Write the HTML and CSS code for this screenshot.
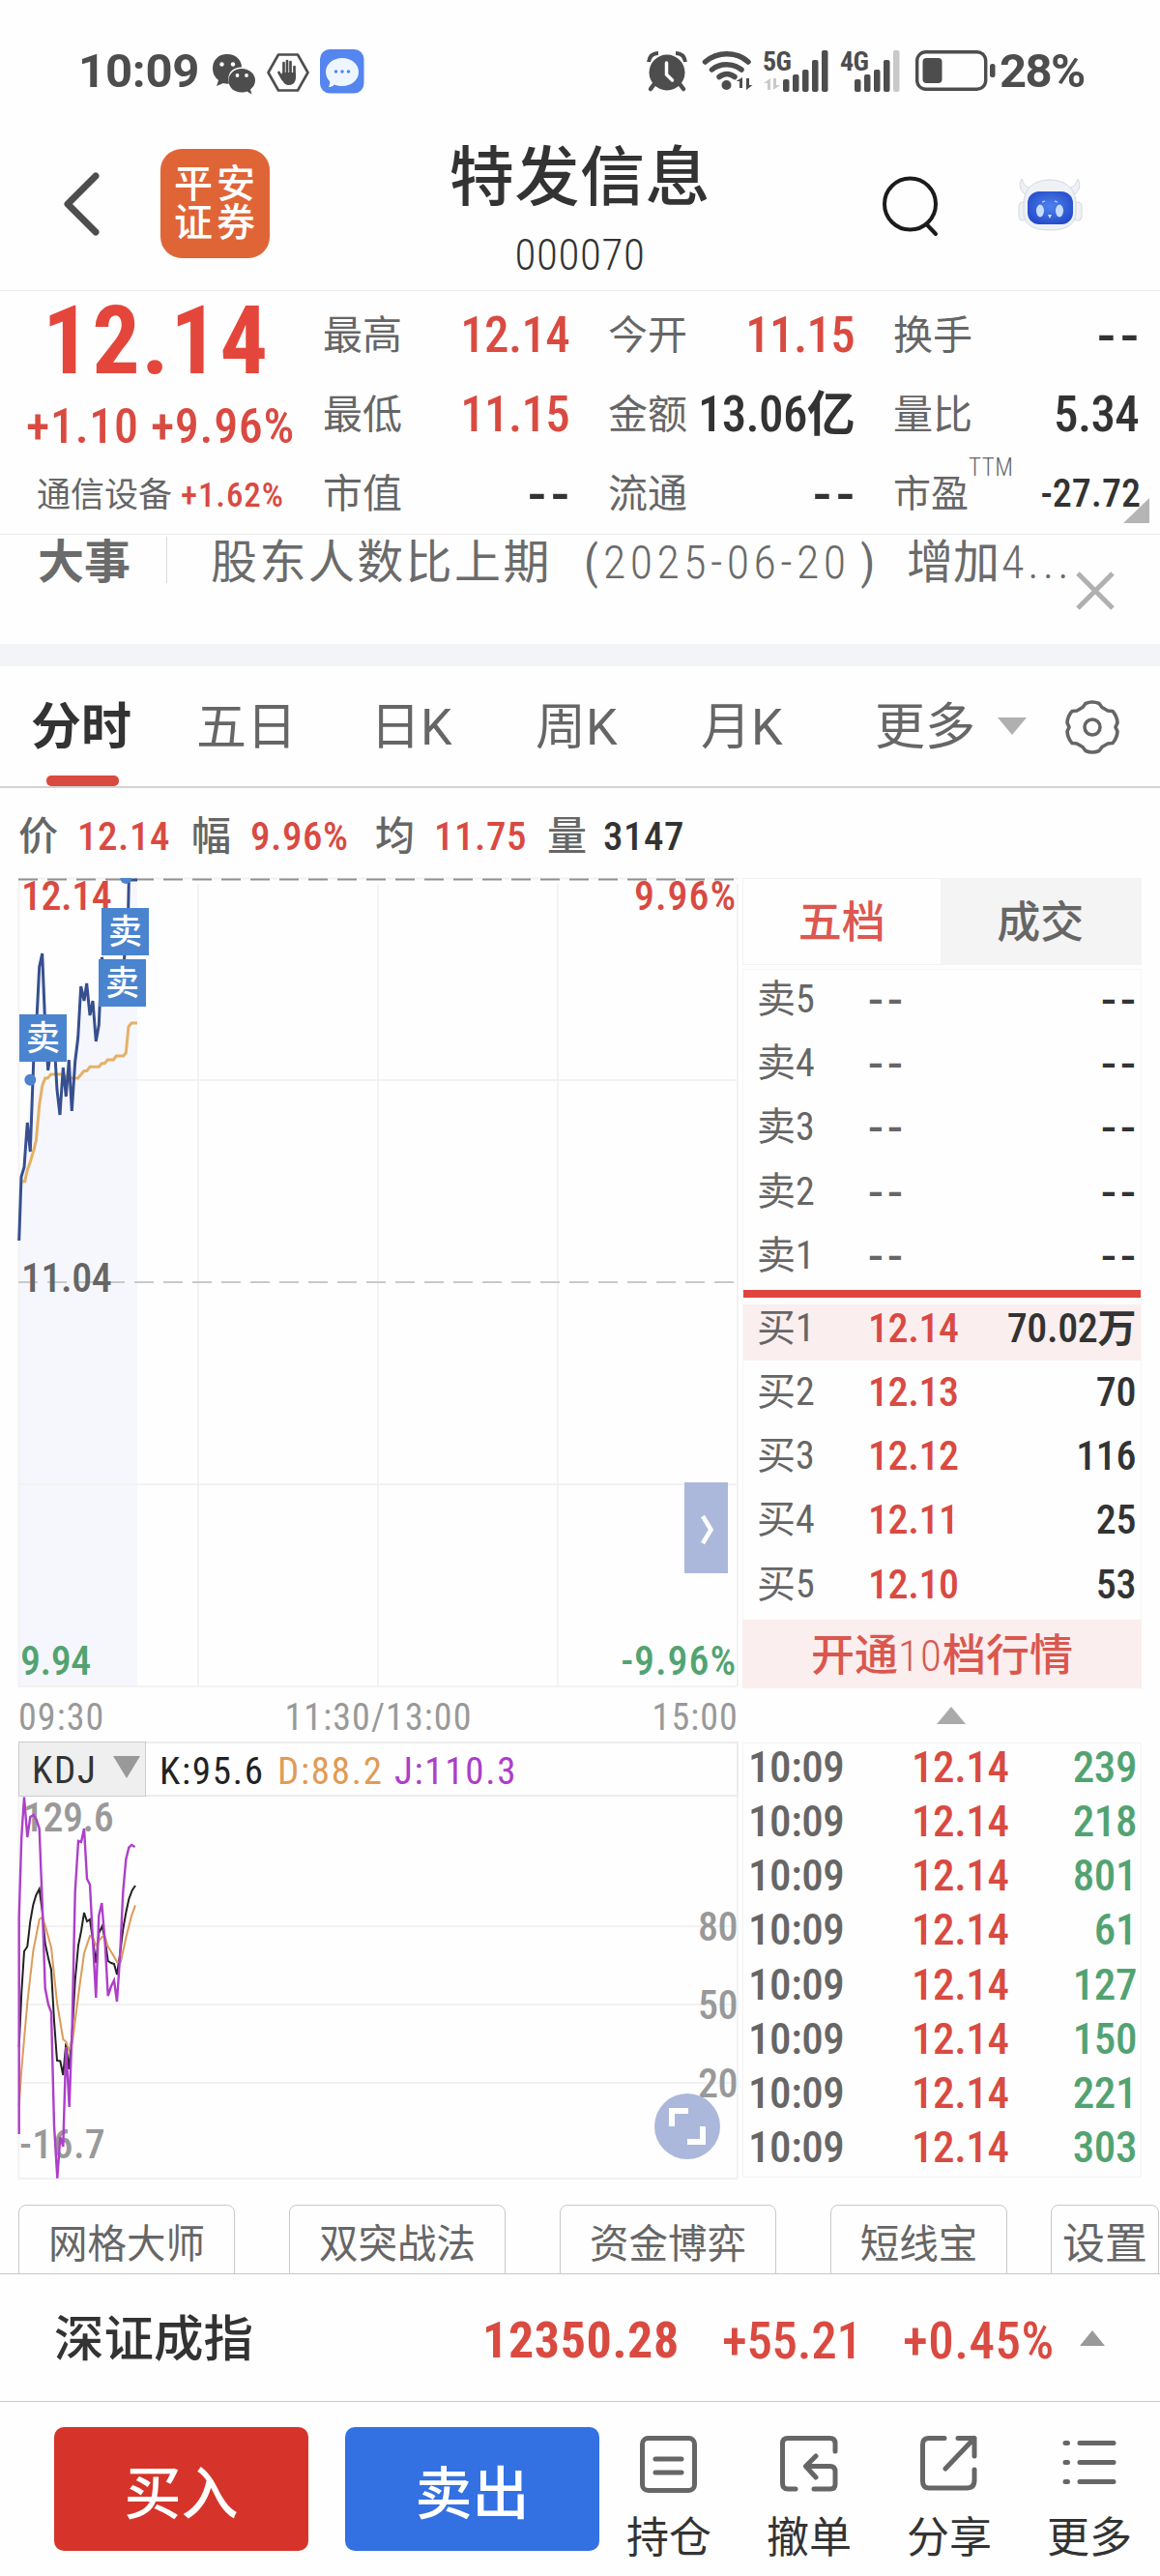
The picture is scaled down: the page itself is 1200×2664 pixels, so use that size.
FILE: index.html
```html
<!DOCTYPE html>
<html lang="zh-CN">
<head>
  <meta charset="UTF-8" />
  <meta name="viewport" content="width=device-width, initial-scale=1.0"/>
  <title>特发信息 000070</title>
  <link rel="stylesheet" href="styles.css">
</head>
<body>
  <div class="app">
    <!-- Status bar -->
    <div class="status-bar">
      <span class="clock">10:09</span>
      <svg class="ic-wechat" width="46" height="44" viewBox="0 0 46 44">
        <path d="M16 3C7 3 1 9 1 18c0 5 2 9 6 12l-2 6 7-3c2 .6 4 .8 6 .6-3-12 5-17 13-17C31 9 25 3 16 3z" fill="#4d4d4d"/>
        <circle cx="10.500" cy="13.500" r="2.200" fill="#fff"/><circle cx="22" cy="13.500" r="2.200" fill="#fff"/>
        <path d="M31 18c-8 0-13.500 5.500-13.500 12.500S23 42.500 31 42.500c2 0 4-.4 5.500-1l5 3-1.500-5c3-2.300 5-5.500 5-9.500C45 23.500 39 18 31 18z" fill="#4d4d4d"/>
        <circle cx="26.500" cy="25" r="1.900" fill="#fff"/><circle cx="36" cy="25" r="1.900" fill="#fff"/>
      </svg>
      <svg class="ic-hand" width="46" height="42" viewBox="0 0 46 42">
        <path d="M13 2.500h20l10.500 18.500L33 39.500H13L2.500 21z" fill="none" stroke="#4d4d4d" stroke-width="2.600" stroke-linejoin="round"/>
        <g stroke="#4d4d4d" stroke-width="2.700" stroke-linecap="round" fill="none">
          <path d="M18.500 11v12M22 9v13M25.500 10v12M29.500 15v9M13.500 21l4 7"/>
        </g>
        <path d="M17 21h14v5c0 5-3 8-7 8-3 0-5-1-7-5l-2-4z" fill="#4d4d4d"/>
      </svg>
      <svg class="ic-msg" width="46" height="46" viewBox="0 0 46 46">
        <rect width="45.500" height="45.500" rx="10" fill="#5585ee"/>
        <path d="M23 9c10 0 17 6.500 17 14.500S33 38 23 38c-3 0-5-.5-8-1.500-2 2-4 2.500-6 2.500 1-2 1.500-4 1-6-2.500-2.500-4-6-4-9.500C6 15.500 13 9 23 9z" fill="#edf5ff"/>
        <circle cx="16.500" cy="23" r="1.800" fill="#5585ee"/><circle cx="23" cy="23" r="1.800" fill="#5585ee"/><circle cx="29.500" cy="23" r="1.800" fill="#5585ee"/>
      </svg>
      <svg class="ic-alarm" width="42" height="42" viewBox="0 0 42 42">
        <circle cx="21" cy="22" r="18.500" fill="#4d4d4d"/>
        <path d="M7 35l-3 4M35 35l3 4" stroke="#4d4d4d" stroke-width="4.500" stroke-linecap="round"/>
        <path d="M2 11C3 5 7 2 12 2M40 11C39 5 35 2 30 2" stroke="#4d4d4d" stroke-width="4" fill="none"/>
        <path d="M20.500 12v12l6 6" stroke="#fff" stroke-width="3.500" fill="none" stroke-linecap="round"/>
      </svg>
      <svg class="ic-wifi" width="54" height="44" viewBox="0 0 54 44">
        <g stroke="#4d4d4d" stroke-width="5.500" fill="none" stroke-linecap="round">
          <path d="M3.500 13C16 2 36 2 48 13"/><path d="M10.500 21C19 14 32 14 41 21"/><path d="M18 28.500c5-4 11-4 16 0"/>
        </g>
        <circle cx="25.500" cy="37" r="5" fill="#4d4d4d"/>
        <path d="M42 29v11h-3v-7h-3.500zM46 42V30h3v7h3.500z" fill="#4d4d4d"/>
      </svg>
      <svg class="ic-signal" width="70" height="44" viewBox="0 0 70 44">
        <text class="net" x="0" y="22">5G</text>
        <path d="M8 30v12H5v-7H1zM11 42V30h3v7h4z" fill="#c9c9c9"/>
        <g fill="#4d4d4d"><rect x="21" y="31" width="6.500" height="13" rx="2"/><rect x="31" y="26" width="6.500" height="18" rx="2"/><rect x="41" y="21" width="6.500" height="23" rx="2"/><rect x="51" y="11" width="6.500" height="33" rx="2"/><rect x="61" y="1" width="6.500" height="43" rx="2"/></g>
      </svg>
      <svg class="ic-signal2" width="64" height="44" viewBox="0 0 64 44">
        <text class="net" x="0" y="22">4G</text>
        <g fill="#4d4d4d"><rect x="15" y="31" width="6.500" height="13" rx="2"/><rect x="25" y="26" width="6.500" height="18" rx="2"/><rect x="35" y="21" width="6.500" height="23" rx="2"/><rect x="45" y="11" width="6.500" height="33" rx="2"/></g>
        <rect x="55" y="1" width="6.500" height="43" rx="2" fill="#c9c9c9"/>
      </svg>
      <svg class="ic-battery" width="84" height="42" viewBox="0 0 84 42">
        <rect x="1.700" y="1.700" width="71" height="38.600" rx="9" fill="none" stroke="#4d4d4d" stroke-width="3.400"/>
        <rect x="7.500" y="8" width="20" height="26" rx="4" fill="#4d4d4d"/>
        <rect x="77" y="14" width="5.500" height="14" rx="2.500" fill="#4d4d4d"/>
      </svg>
      <span class="percent">28%</span>
    </div>

    <!-- Title bar -->
    <header class="title-bar">
      <svg class="back" width="40" height="68" viewBox="0 0 40 68">
        <path d="M34 5L5 34l29 29" fill="none" stroke="#4d4d4d" stroke-width="7" stroke-linecap="round" stroke-linejoin="round"/>
      </svg>
      <div class="broker"><span>平安</span><span>证券</span></div>
      <div class="stock">
        <h1>特发信息</h1>
        <p>000070</p>
      </div>
      <svg class="search" width="62" height="66" viewBox="0 0 62 66">
        <circle cx="29.500" cy="30" r="26.500" fill="none" stroke="#1b1b1b" stroke-width="4"/>
        <path d="M46.500 51l9.500 10" stroke="#1b1b1b" stroke-width="4" stroke-linecap="round"/>
      </svg>
      <svg class="robot" width="68" height="56" viewBox="0 0 68 56">
        <defs>
          <radialGradient id="face" cx="50%" cy="45%" r="65%"><stop offset="0" stop-color="#4f82ee"/><stop offset="1" stop-color="#1f45c6"/></radialGradient>
        </defs>
        <g fill="#eef1f5" stroke="#d5d9df" stroke-width="1">
          <path d="M4 1C0 8 3 15 10 19l5-9C9 11 6 7 4 1zM62 1c4 7 1 14-6 18l-5-9c6 1 9-3 11-9z"/>
          <rect x="1" y="25" width="9" height="19" rx="4"/><rect x="57" y="25" width="9" height="19" rx="4"/>
          <path d="M33 2C18 2 6 10 6 27v8c0 12 8 19 27 19s27-7 27-19v-8C60 10 48 2 33 2z"/>
        </g>
        <rect x="10" y="14" width="47" height="34" rx="12" fill="url(#face)"/>
        <ellipse cx="23" cy="34" rx="4" ry="6.500" fill="#c9dcfb"/><ellipse cx="43" cy="34" rx="4" ry="6.500" fill="#c9dcfb"/>
        <path d="M31 38h4l-2 4z" fill="#d7e6ff"/>
        <path d="M25 25l3-1M41 25l-3-1" stroke="#a9c5fa" stroke-width="1.500"/>
      </svg>
    </header>

    <!-- Quote summary -->
    <section class="quote">
      <div class="quote-main">
        <div class="price">12.14</div>
        <div class="change">+1.10 +9.96%</div>
        <div class="sector"><span>通信设备</span><b>+1.62%</b></div>
      </div>
      <div class="stats">
        <div class="stat"><span>最高</span><b class="up">12.14</b></div>
        <div class="stat"><span>今开</span><b class="up">11.15</b></div>
        <div class="stat"><span>换手</span><b class="dash">--</b></div>
        <div class="stat"><span>最低</span><b class="up">11.15</b></div>
        <div class="stat"><span>金额</span><b>13.06<i>亿</i></b></div>
        <div class="stat"><span>量比</span><b>5.34</b></div>
        <div class="stat"><span>市值</span><b class="dash">--</b></div>
        <div class="stat"><span>流通</span><b class="dash">--</b></div>
        <div class="stat"><span class="pe">市盈<sup>TTM</sup></span><b class="small">-27.72</b></div>
      </div>
    </section>

    <!-- News ticker -->
    <section class="news">
      <strong>大事</strong>
      <p><span class="n-a">股东人数比上期</span><span class="n-p">(</span><span class="n-d">2025-06-20</span><span class="n-q">)</span><span class="n-b">增加</span><span class="n-c">4...</span></p>
      <svg class="close" width="40" height="40" viewBox="0 0 40 40">
        <path d="M2 2l36 36M38 2L2 38" stroke="#b0b0b0" stroke-width="5"/>
      </svg>
    </section>

    <!-- Period tabs -->
    <nav class="tabs">
      <a class="tab active">分时</a>
      <a class="tab wide">五日</a>
      <a class="tab">日K</a>
      <a class="tab">周K</a>
      <a class="tab wide">月K</a>
      <a class="tab more">更多</a>
      <svg class="arrow" width="30" height="18" viewBox="0 0 30 18"><path d="M0 0h30L15 18z" fill="#b0b0b0"/></svg>
      <svg class="gear" width="56" height="58" viewBox="0 0 56 58">
        <path d="M21 4.500q7-3 14 0l3 4 6 3.500 5 .500q4.500 5 5 12l-2 4.500 2 4.500q-.5 7-5 12l-5 .500-6 3.500-3 4q-7 3-14 0l-3-4-6-3.500-5-.500q-4.500-5-5-12l2-4.500-2-4.500q.5-7 5-12l5-.500 6-3.500z" fill="none" stroke="#666" stroke-width="3.600" stroke-linejoin="round"/>
        <circle cx="28" cy="29" r="8" fill="none" stroke="#666" stroke-width="3.600"/>
      </svg>
    </nav>

    <div class="info">
      <span>价</span><b>12.14</b><span>幅</span><b>9.96%</b><span>均</span><b>11.75</b><span>量</span><b class="dark">3147</b>
    </div>

    <main class="market">
      <div class="charts">
        <!-- Intraday chart -->
        <div class="intraday">
          <svg width="745" height="838" viewBox="0 0 745 838">
            <path class="area" d="M0 836V375L3 309 6 299 9.300 253 15.700 190 24.700 78 30.700 199 43 245 61.700 165 70.700 109 80.300 169 86.300 82 96 115 109.700 82 114.300 2H123V836z"/>
            <path class="grid" d="M.5 0V836M186 6V836M372 6V836M558 6V836M744 6V836M0 .5H745M36 209H744M0 627H744M0 836H744"/>
            <path class="dash-top" d="M0 1.500H741"/>
            <path class="dash-mid" d="M0 418H741"/>
            <text class="t-up" x="3" y="33">12.14</text>
            <text class="t-up pct" x="743" y="33" text-anchor="end">9.96%</text>
            <text class="t-mid" x="3" y="428">11.04</text>
            <text class="t-down" x="2" y="824">9.94</text>
            <text class="t-down pct" x="743" y="824" text-anchor="end">-9.96%</text>
            <polyline class="avg" points="4.300,314 6.700,313.700 9.300,302 12.300,293.700 15.700,282 18.300,272 21.700,235 24.700,215 27.700,207 30.300,207 33.700,203 44.300,203 49.300,205.300 56,207 61.700,207 67.700,199.700 71,199.300 74,195.300 83.300,195.300 86.300,191.700 89.300,191.700 92.300,188 98.300,188 101.300,184 108.700,184 111.300,180.700 114,153.700 117,150 123,150"/>
            <polyline class="line" points="0.700,375 3,309 6,299 9.300,253 12.300,283 15.700,190 18.700,152 21.700,92 24.700,78 27.300,142 30.700,199 34.300,172 37.700,179 40,219 43,245 46.300,196 49.300,226 52.300,188 55.300,241 58.700,190 61.700,165 64.700,112 68,127 70.700,109 74,142 77,127 80.300,169 83.300,152 86.300,82 91,100 96,115 106,105 109.700,82 113.700,32 114.300,2 123,2"/>
            <circle class="dot" cx="12.300" cy="208.700" r="6"/>
            <path class="dot" d="M105.300 0h12a6 6 0 0 1-12 0z"/>
            <g class="badge">
              <rect x="1" y="141" width="49" height="49"/><text x="25.500" y="178">卖</text>
              <rect x="86" y="31" width="49" height="49"/><text x="110.500" y="68">卖</text>
              <rect x="83" y="84" width="49" height="49"/><text x="107.500" y="121">卖</text>
            </g>
          </svg>
          <button class="expand">
            <svg width="14" height="32" viewBox="0 0 14 32"><path d="M2 2l8.500 14L2 30" fill="none" stroke="#fff" stroke-width="4.500"/></svg>
          </button>
        </div>
        <div class="time-axis"><span>09:30</span><span class="noon">11:30/13:00</span><span>15:00</span></div>

        <!-- KDJ indicator -->
        <div class="kdj-head">
          <div class="kdj-select">KDJ<svg width="28" height="23" viewBox="0 0 28 23"><path d="M0 0h28L14 23z" fill="#999"/></svg></div>
          <span class="k">K:95.6</span><span class="d">D:88.2</span><span class="j">J:110.3</span>
        </div>
        <div class="kdj">
          <svg width="745" height="396" viewBox="0 0 745 396">
            <path class="grid" d="M.5 0V395M744 0V395M0 134H744M0 215H744M0 296H744M0 395H744"/>
            <text x="5" y="36">129.6</text>
            <text class="low" x="1" y="374">-16.7</text>
            <text x="744" y="149" text-anchor="end">80</text>
            <text x="744" y="230" text-anchor="end">50</text>
            <text x="744" y="311" text-anchor="end">20</text>
            <polyline class="pk" points="0.700,259 3.300,202 6,160 9.300,155 12.300,129 15.300,112 18.300,102 21.700,95.500 24.700,118 27.700,152 31,167 34,179 37,232 40,273 43.300,273.500 46.300,288 49.300,255 52.300,282 55.700,244 58.700,190 62,154 65,139 68,120 71,129 74,127 77,148 80.300,172 83.300,141 86.700,134 89.700,148 92.700,170 96,172 99,173 102,184 105,164 108.300,137 111.300,120 114.300,106 117.700,97 121,92"/>
            <polyline class="pd" points="0.700,320 3.300,282 9.300,213 15.300,160 21.700,127 24.700,124.600 27.700,133 34,156 40,213 46.300,251 49.300,253.500 52.300,262 55.700,255.500 62,206 68,162 74,144 77,145 80.300,154 83.300,149 86.700,145 89.700,145 92.700,155 99,165.500 102,171 106,170.500 111.300,146 117,123.400 121,112.300"/>
            <polyline class="pj" points="0.700,349 0.700,125 3.300,41 6,0.500 9.300,42 12.300,21 15.700,19 18.700,24 21.700,33 24.700,110 27.700,198 31,215 34,223 37,340 40.300,394.700 43.300,352 46.300,362 49.300,259 52.700,321 55.700,236 58.700,98.500 62,46 65,47 68,33 71,85 74,91 77,148 80.300,208 83.300,123 86.300,110 89.700,152 92.700,206 96,196 99,190 102,212 105,167 108.300,98.500 111.300,65 114.300,52.600 117,50 120.700,52"/>
          </svg>
          <button class="fullscreen">
            <svg width="40" height="40" viewBox="0 0 40 40"><path d="M4 20V4h17M36 20v16H20" fill="none" stroke="#fff" stroke-width="6"/></svg>
          </button>
        </div>
      </div>

      <!-- Order book -->
      <aside class="book">
        <div class="book-tabs"><span class="on">五档</span><span>成交</span></div>
        <div class="levels">
          <div class="level"><span>卖5</span><em>--</em><b class="dash">--</b></div>
          <div class="level"><span>卖4</span><em>--</em><b class="dash">--</b></div>
          <div class="level"><span>卖3</span><em>--</em><b class="dash">--</b></div>
          <div class="level"><span>卖2</span><em>--</em><b class="dash">--</b></div>
          <div class="level"><span>卖1</span><em>--</em><b class="dash">--</b></div>
          <div class="split"></div>
          <div class="level best"><span>买1</span><i>12.14</i><b>70.02<strong>万</strong></b></div>
          <div class="level"><span>买2</span><i>12.13</i><b>70</b></div>
          <div class="level"><span>买3</span><i>12.12</i><b>116</b></div>
          <div class="level"><span>买4</span><i>12.11</i><b>25</b></div>
          <div class="level"><span>买5</span><i>12.10</i><b>53</b></div>
        </div>
        <div class="open-ten">开通<span>10</span>档行情</div>
        <div class="fold"><svg width="30" height="18" viewBox="0 0 30 18"><path d="M15 0l15 18H0z" fill="#aaa"/></svg></div>
        <div class="ticks">
          <div class="tick"><span>10:09</span><i>12.14</i><b>239</b></div>
          <div class="tick"><span>10:09</span><i>12.14</i><b>218</b></div>
          <div class="tick"><span>10:09</span><i>12.14</i><b>801</b></div>
          <div class="tick"><span>10:09</span><i>12.14</i><b>61</b></div>
          <div class="tick"><span>10:09</span><i>12.14</i><b>127</b></div>
          <div class="tick"><span>10:09</span><i>12.14</i><b>150</b></div>
          <div class="tick"><span>10:09</span><i>12.14</i><b>221</b></div>
          <div class="tick"><span>10:09</span><i>12.14</i><b>303</b></div>
        </div>
      </aside>
    </main>

    <!-- Strategy shortcuts -->
    <div class="tools">
      <span>网格大师</span><span>双突战法</span><span>资金博弈</span><span class="short">短线宝</span><span class="setup">设置</span>
    </div>

    <div class="index-bar">
      <span class="name">深证成指</span>
      <b>12350.28</b>
      <span class="diff">+55.21</span>
      <span class="rate">+0.45%</span>
      <svg width="26" height="16" viewBox="0 0 26 16"><path d="M13 0l13 16H0z" fill="#999"/></svg>
    </div>

    <!-- Trade bar -->
    <footer class="trade-bar">
      <button class="buy">买入</button>
      <button class="sell">卖出</button>
      <div class="action">
        <svg width="60" height="60" viewBox="0 0 60 60"><rect x="2.500" y="2.500" width="54" height="54" rx="6"/><path d="M16 24h27M16 38h27"/></svg>
        <span>持仓</span>
      </div>
      <div class="action">
        <svg width="60" height="60" viewBox="0 0 60 60"><path d="M57 16V8q0-5.500-5.500-5.500H8Q2.500 2.500 2.500 8v41q0 6 5.500 6h8M35 55h17q5 0 5-5V37q0-5.500-5.500-5.500H29M37 21L26.500 31.500 37 43"/></svg>
        <span>撤单</span>
      </div>
      <div class="action">
        <svg width="60" height="60" viewBox="0 0 60 60"><path d="M25 2.500H9Q2.500 2.500 2.500 9v38q0 7 6.500 7h39q8 0 8-8V35M39 2.500h17V21M56 2.500L26 34"/></svg>
        <span>分享</span>
      </div>
      <div class="action">
        <svg width="60" height="60" viewBox="0 0 60 60"><path d="M5 7.500h2.500M5 27.500h2.500M5 47.500h2.500M20 7.500h35M20 27.500h35M20 47.500h35"/></svg>
        <span>更多</span>
      </div>
    </footer>
  </div>
</body>
</html>
```

FILE: styles.css
```css
:root {
  --red: #d94a41;
  --green: #53a372;
  --text: #333;
  --muted: #666;
  --line: #ececec;
  --grid: #f2f2f3;
  --blue-soft: #acb8db;
}

* {
  margin: 0;
  padding: 0;
  box-sizing: border-box;
}

body {
  width: 1200px;
  background: #fefefe;
  color: var(--text);
  font-family: Roboto, "Noto Sans CJK SC", sans-serif;
  font-stretch: 75%;
}

b, i, em {
  font-style: normal;
  font-weight: 500;
}

svg {
  display: block;
  flex: none;
  overflow: visible;
}

button {
  border: none;
  font-family: inherit;
}

.app {
  width: 1200px;
  height: 2664px;
  overflow: hidden;
}

/* Status bar */
.status-bar {
  height: 135px;
  display: flex;
  align-items: flex-start;
  padding: 51px 0 0 81px;
  color: #4d4d4d;
}

.clock,
.percent {
  font-size: 49px;
  line-height: 45px;
  font-weight: 700;
  font-stretch: 100%;
}

.clock {
  width: 138px;
  letter-spacing: -0.2px;
}

.percent {
  margin-left: 3px;
  letter-spacing: -1.6px;
}

.ic-wechat { margin-top: 2px; }
.ic-hand { margin: 3px 0 0 10px; }
.ic-msg { margin-left: 10px; }
.ic-alarm { margin: 2px 0 0 292px; }
.ic-wifi { margin-left: 15px; }
.ic-signal { margin-left: 9px; }
.ic-signal2 { margin-left: 10px; }
.ic-battery { margin: 1px 0 0 14px; }

.net {
  font-size: 28px;
  font-weight: 700;
  letter-spacing: -0.6px;
  fill: #4d4d4d;
}

/* Title bar */
.title-bar {
  height: 166px;
  display: flex;
  align-items: flex-start;
  padding-left: 65px;
  border-bottom: 1px solid var(--line);
}

.back { margin-top: 42px; }

.broker {
  width: 113px;
  height: 113px;
  margin: 19px 0 0 61px;
  padding: 17px 0 0 14px;
  border-radius: 22px;
  background: #df6537;
  color: #fff;
}

.broker span {
  display: block;
  font-size: 40px;
  line-height: 40px;
  font-weight: 500;
  letter-spacing: 4px;
}

.stock {
  width: 274px;
  margin: 2px 0 0 184px;
  text-align: center;
}

.stock h1 {
  font-size: 67px;
  line-height: 94px;
  font-weight: 500;
  letter-spacing: 0.6px;
}

.stock p {
  margin-top: 12px;
  font-size: 45px;
  line-height: 42px;
  font-weight: 300;
  letter-spacing: 0.600px;
}

.search { margin: 46px 0 0 175px; }
.robot { margin: 49px 0 0 79px; }

/* Quote summary */
.quote {
  height: 252px;
  display: flex;
  border-bottom: 1px solid var(--line);
  position: relative;
}

.quote::after {
  content: "";
  position: absolute;
  right: 11px;
  bottom: 11px;
  width: 27px;
  height: 26px;
  background: #b5b5b5;
  clip-path: polygon(100% 0, 100% 100%, 0 100%);
}

.quote-main {
  width: 334px;
  color: var(--red);
}

.price {
  padding-left: 44px;
  font-size: 98px;
  line-height: 104px;
  font-weight: 700;
  letter-spacing: 1.600px;
  color: #e4463c;
}

.change {
  padding-left: 27px;
  font-size: 50px;
  line-height: 72px;
  font-weight: 500;
  letter-spacing: 0.700px;
  white-space: nowrap;
}

.sector {
  display: flex;
  padding-left: 38px;
  line-height: 72px;
  gap: 9px;
}

.sector span {
  font-size: 35px;
  color: var(--muted);
}

.sector b {
  font-size: 35px;
  letter-spacing: 0.900px;
}

.stats {
  display: grid;
  grid-template-columns: 255px 255px 254px;
  grid-auto-rows: 82px;
  column-gap: 40px;
  padding-top: 5px;
}

.stat {
  display: flex;
  justify-content: space-between;
  align-items: center;
  line-height: 82px;
}

.stat span {
  font-size: 41px;
  color: var(--muted);
}

.stat b {
  font-size: 51px;
  letter-spacing: -0.700px;
  white-space: nowrap;
}

.stat .up { color: var(--red); }

.stat b.dash {
  font-size: 56px;
  font-stretch: 100%;
  letter-spacing: 5px;
  margin-right: -5px;
}

.stat b i {
  font-size: 50px;
  font-weight: 700;
}

.stat b.small {
  font-size: 40px;
  letter-spacing: 0;
  margin-right: -2px;
}

.stat .pe {
  display: flex;
  font-size: 39px;
}

.pe sup {
  font-size: 25px;
  font-weight: 300;
  line-height: 28px;
  letter-spacing: 0.500px;
}

/* News */
.news {
  height: 136px;
  display: flex;
  align-items: flex-start;
  padding-left: 39px;
  color: #6b6b6b;
  border-bottom: 23px solid #f3f4f8;
}

.news strong {
  width: 134px;
  height: 48px;
  margin-top: 2px;
  border-right: 1px solid #ddd;
  font-size: 48px;
  line-height: 54px;
}

.news p {
  width: 940px;
  padding-left: 45px;
  font-size: 48px;
  line-height: 58px;
  white-space: nowrap;
  display: flex;
}

.n-a { width: 386px; letter-spacing: 2.400px; }
.n-p { width: 20px; }
.n-d { width: 266px; font-weight: 300; letter-spacing: 4.400px; }
.n-q { width: 48px; }
.n-b { width: 98px; }
.n-c { font-weight: 300; letter-spacing: 4px; }

.close { margin-top: 38px; }

/* Period tabs */
.tabs {
  height: 126px;
  display: flex;
  align-items: flex-start;
  padding-left: 32px;
  border-bottom: 2px solid #d2d2d2;
}

.tab {
  flex: none;
  width: 171px;
  font-size: 52px;
  line-height: 128px;
  font-stretch: 100%;
  color: var(--muted);
  white-space: nowrap;
}

.tab.wide { width: 180px; }
.tab.more { width: 127px; }

.tab.active {
  position: relative;
  color: var(--text);
  font-weight: 700;
}

.tab.active::after {
  content: "";
  position: absolute;
  left: 16px;
  top: 113px;
  width: 75px;
  height: 11px;
  border-radius: 5px;
  background: var(--red);
}

.arrow { margin-top: 53px; }
.gear { margin: 34px 0 0 40px; }

.info {
  height: 93px;
  display: grid;
  grid-template-columns: 61px 118px 61px 129px 61px 117px 58px 100px;
  padding-left: 19px;
  font-size: 41px;
  line-height: 100px;
}

.info span {
  color: var(--muted);
  font-weight: 500;
}

.info b {
  color: var(--red);
  letter-spacing: 0.500px;
}

.info .dark { color: var(--text); }

/* Charts */
.market {
  height: 1372px;
  display: flex;
  padding-left: 19px;
  gap: 4px;
}

.charts { width: 745px; }

.intraday,
.kdj {
  position: relative;
}

.intraday { height: 838px; }

.grid {
  fill: none;
  stroke: var(--grid);
  stroke-width: 2;
}

.area { fill: #f5f7fc; }

.dash-top,
.dash-mid {
  stroke: #8f8f8f;
  stroke-width: 2;
  stroke-dasharray: 20 10;
}

.dash-mid { stroke: #c9c9c9; }

.intraday text,
.kdj text {
  font-size: 42px;
  font-weight: 500;
  letter-spacing: -0.500px;
}

.intraday .t-up { fill: var(--red); }
.intraday .t-mid { fill: var(--muted); }
.intraday .t-down { fill: var(--green); }
.intraday .pct { letter-spacing: 0.900px; }
.kdj .low { letter-spacing: 0.300px; }

.avg,
.line,
.pk,
.pd,
.pj {
  fill: none;
  stroke-width: 3;
}

.line { stroke: #374f8f; }
.avg { stroke: #e6b066; }
.dot { fill: #4a84cf; }

.badge rect { fill: #4a84cf; }

.intraday .badge text {
  font-size: 35px;
  font-weight: 500;
  fill: #fff;
  text-anchor: middle;
  letter-spacing: 0;
}

.expand {
  position: absolute;
  left: 689px;
  top: 625px;
  width: 45px;
  height: 94px;
  background: var(--blue-soft);
}

.expand svg { margin: 3px 0 0 17px; }

.time-axis {
  height: 55px;
  display: flex;
  justify-content: space-between;
  font-size: 38px;
  line-height: 60px;
  letter-spacing: 1.100px;
  color: #999;
}

.kdj-head {
  height: 57px;
  display: flex;
  border: 2px solid var(--line);
  border-left: none;
  font-size: 39px;
  line-height: 58px;
  letter-spacing: 1.700px;
}

.kdj-select {
  width: 132px;
  height: 57px;
  margin: -2px 14px 0 0;
  padding: 0 5px 0 13px;
  display: flex;
  justify-content: space-between;
  background: #efefef;
  border: 1px solid #ccc;
}

.kdj-select svg { margin-top: 14px; }

.k { width: 122px; color: #222; }
.d { width: 121px; color: #e09b55; }
.j { color: #ad3fc9; }

.kdj text { fill: #999; }

.pk { stroke: #222; stroke-width: 2; }
.pd { stroke: #dd9b5a; stroke-width: 2; }
.pj { stroke: #ad3fc9; stroke-width: 2.400; }

.fullscreen {
  position: absolute;
  left: 658px;
  top: 307px;
  width: 68px;
  height: 68px;
  border-radius: 50%;
  background: var(--blue-soft);
}

.fullscreen svg { margin-left: 14px; }

/* Order book */
.book { width: 413px; }

.book-tabs {
  height: 90px;
  display: flex;
  border: 1px solid #f3f3f3;
  font-size: 45px;
  line-height: 92px;
  text-align: center;
}

.book-tabs span {
  width: 208px;
  background: #f4f4f4;
  color: var(--muted);
  font-weight: 500;
}

.book-tabs .on {
  width: 204px;
  background: none;
  color: #dc5850;
}

.levels {
  height: 673px;
  margin-top: 4px;
  border: 1px solid #f5f5f5;
  border-bottom: none;
}

.level {
  height: 66.200px;
  display: grid;
  grid-template-columns: 115px 120px 1fr;
  padding: 0 5px 0 14px;
  font-size: 42px;
  line-height: 61px;
}

.level span {
  color: var(--muted);
  font-size: 40px;
}

.level i,
.level b {
  letter-spacing: -0.400px;
}

.level i {
  color: var(--red);
}

.level b {
  text-align: right;
  white-space: nowrap;
}

.level strong { font-size: 40px; }

.level em,
.level .dash {
  font-size: 47px;
  font-stretch: 100%;
  letter-spacing: 4px;
  color: var(--muted);
}

.level .dash {
  color: var(--text);
  margin-right: -4px;
}

.split {
  height: 8px;
  margin-bottom: 7px;
  background: #df453d;
}

.level.best {
  height: 58px;
  margin-bottom: 2px;
  line-height: 50px;
  background: #fbeeee;
}

.best ~ .level { line-height: 62px; }

.open-ten {
  height: 71px;
  background: #fbeeee;
  color: #da574f;
  font-size: 45px;
  line-height: 75px;
  font-weight: 500;
  text-align: center;
}

.open-ten span {
  font-weight: 300;
  letter-spacing: 1px;
}

.fold {
  height: 56px;
  display: flex;
  justify-content: center;
  padding: 19px 0 0 18px;
}

.ticks {
  height: 450px;
  border: 1px solid #f3f3f3;
}

.tick {
  height: 56.150px;
  display: grid;
  grid-template-columns: 169px 120px 1fr;
  padding: 0 4px 0 5px;
  font-size: 45px;
  line-height: 49px;
  font-weight: 500;
  letter-spacing: -0.400px;
}

.tick span { color: var(--muted); }
.tick i { color: var(--red); }
.tick b { color: var(--green); text-align: right; }

/* Shortcuts */
.tools {
  height: 72px;
  display: flex;
  gap: 56px;
  padding-left: 19px;
  overflow: hidden;
  border-bottom: 1px solid #c8c8c8;
}

.tools span {
  flex: none;
  width: 224px;
  height: 78px;
  border: 1px solid #c9c9c9;
  border-radius: 8px;
  font-size: 40.500px;
  line-height: 81px;
  text-align: center;
  color: var(--muted);
}

.tools .short { width: 183px; }

.tools .setup {
  width: 112px;
  margin-left: -11px;
  font-size: 44px;
}

.index-bar {
  height: 132px;
  display: flex;
  padding-left: 56px;
  border-bottom: 1px solid #c8c8c8;
  line-height: 138px;
  color: var(--red);
  font-size: 53px;
  font-weight: 500;
}

.index-bar .name {
  width: 443px;
  color: var(--text);
  font-size: 51.500px;
  line-height: 136px;
}

.index-bar b {
  width: 248px;
  font-size: 52px;
  font-weight: 700;
  letter-spacing: 0.600px;
}

.diff { width: 187px; letter-spacing: -0.300px; }
.rate { width: 183px; letter-spacing: 0.500px; }
.index-bar svg { margin-top: 58px; }

/* Trade bar */
.trade-bar {
  height: 180px;
  display: flex;
  align-items: flex-start;
  padding: 26px 0 0 56px;
}

.buy,
.sell {
  flex: none;
  width: 263px;
  height: 128px;
  margin-right: 38px;
  border-radius: 10px;
  background: #d6342a;
  color: #fff;
  font-size: 59px;
  font-weight: 500;
}

.sell {
  margin-right: 19px;
  background: #3370e2;
}

.action {
  width: 145px;
  display: flex;
  flex-direction: column;
  align-items: center;
  flex: none;
  padding: 9px 39px 0 0;
}

.action svg {
  fill: none;
  stroke: #666;
  stroke-width: 5;
  stroke-linecap: round;
  stroke-linejoin: round;
}

.action span {
  margin-top: 16px;
  font-size: 44px;
  line-height: 60px;
  white-space: nowrap;
}
```
